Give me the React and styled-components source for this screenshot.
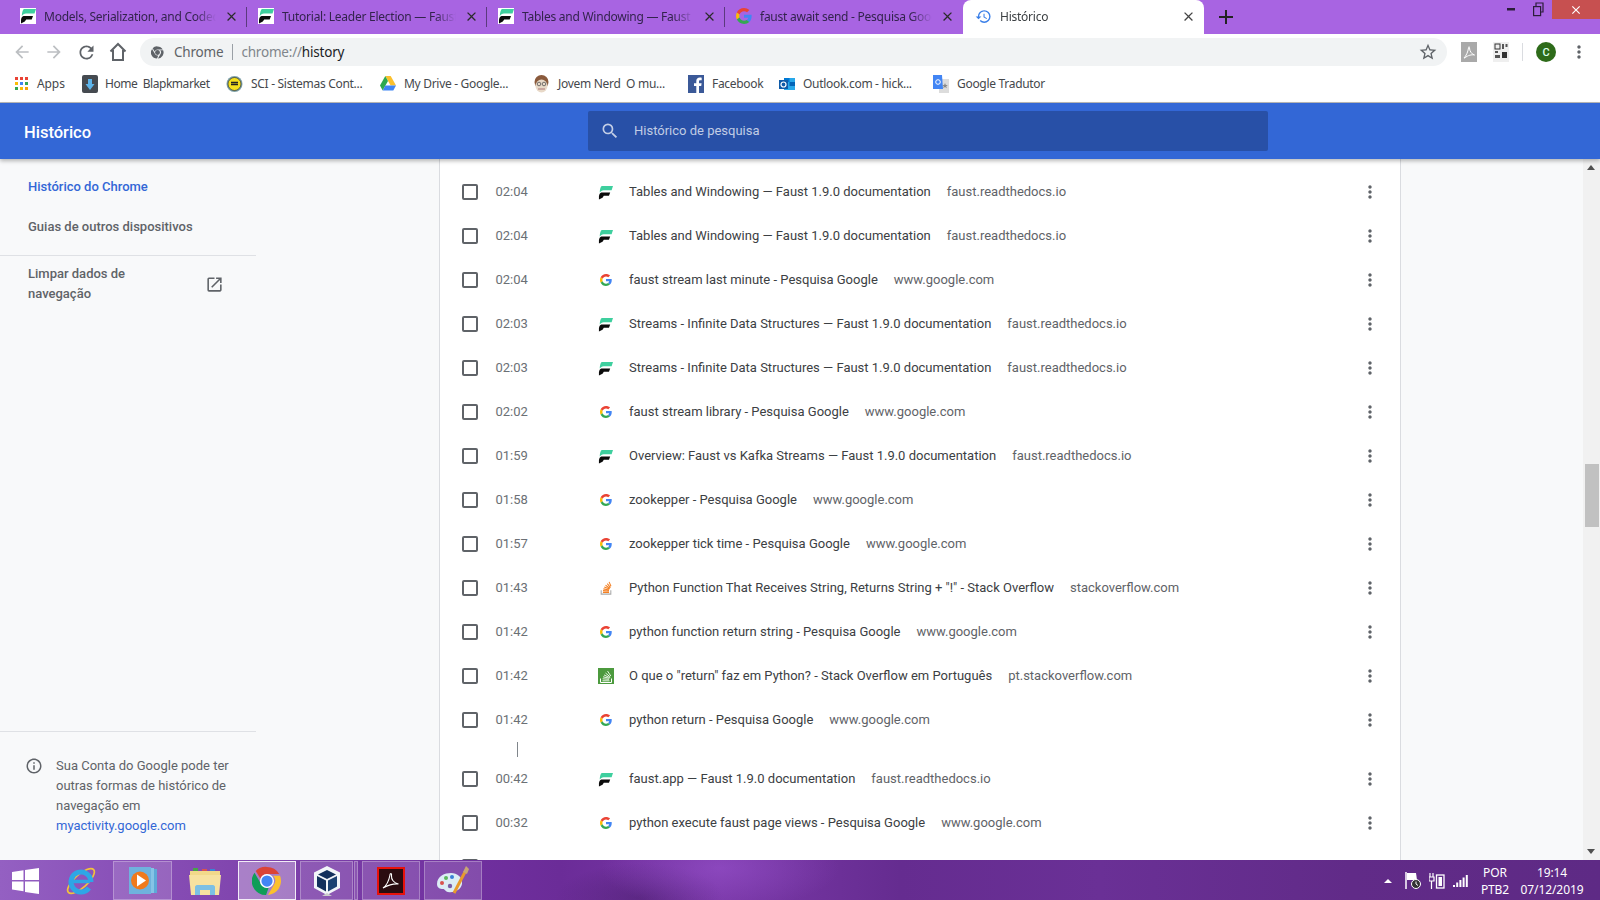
import React from 'react';
import styled, { createGlobalStyle } from 'styled-components';
import { MdArrowBack, MdArrowForward, MdRefresh, MdSearch, MdOpenInNew, MdInfoOutline, MdMoreVert, MdClose, MdAdd, MdHistory, MdStarBorder } from 'react-icons/md';

const Global = createGlobalStyle`
  html, body { margin: 0; padding: 0; height: 100%; overflow: hidden; background: #fff; }
  * { box-sizing: border-box; }
`;
const Page = styled.div`width:1600px;height:900px;display:flex;flex-direction:column;overflow:hidden;font-family:Roboto,"Liberation Sans",sans-serif;`;

const TabStrip = styled.div`height:34px;flex:none;background:#a864e2;display:flex;align-items:stretch;font-family:"Noto Sans","Open Sans",sans-serif;`;
const Tab = styled.div`
  width:${p => p.$w}px;flex:none;display:flex;align-items:center;padding-left:${p => p.$pad}px;padding-right:8px;padding-bottom:2px;gap:8px;font-size:12px;letter-spacing:-.25px;
  color:${p => p.$active ? '#3c4043' : '#33234d'};background:${p => p.$active ? '#fff' : 'transparent'};border-radius:${p => p.$active ? '8px 8px 0 0' : '0'};
  position:relative;
  ${p => p.$sep ? `&::after{content:"";position:absolute;right:0;top:7px;height:20px;width:1px;background:#5b3a7e;}` : ''}
`;
const TabTitle = styled.span`flex:1;min-width:0;white-space:nowrap;overflow:hidden;-webkit-mask-image:linear-gradient(90deg,#000 88%,transparent);mask-image:linear-gradient(90deg,#000 88%,transparent);`;
const NewTab = styled.div`width:44px;display:flex;align-items:center;justify-content:center;color:#222;font-size:24px;padding-bottom:1px;`;
const WindowControls = styled.div`margin-left:auto;display:flex;height:19px;color:#2b1d3a;align-items:flex-start;`;
const WinButton = styled.div`width:${p => p.$w}px;height:19px;display:flex;align-items:center;justify-content:center;background:${p => p.$close ? '#c75050' : 'transparent'};color:${p => p.$close ? '#fff' : '#2b1d3a'};`;

const Toolbar = styled.div`height:34px;flex:none;background:#fff;display:flex;align-items:center;padding-left:6px;padding-top:2px;`;
const NavIcon = styled.div`width:${p => p.$w || 32}px;flex:none;display:flex;justify-content:center;align-items:center;color:${p => p.$dim ? '#bcbfc2' : '#5f6368'};`;
const Omnibox = styled.div`width:1307px;height:28px;margin-left:6px;flex:none;background:#f1f3f4;border-radius:14px;display:flex;align-items:center;padding-left:11px;padding-right:9px;font-family:"Noto Sans",sans-serif;font-size:13.5px;letter-spacing:-.2px;color:#5f6368;`;
const OmniSite = styled.span`margin-left:10px;`;
const OmniSep = styled.span`width:1px;height:16px;background:#9aa0a6;margin:0 8px 0 9px;`;
const OmniPath = styled.span`color:#80868b;`;
const OmniStrong = styled.span`color:#202124;`;
const OmniStar = styled.div`margin-left:auto;display:flex;color:#5f6368;`;
const Extensions = styled.div`display:flex;align-items:center;margin-left:14px;flex:1;`;
const ToolSep = styled.span`width:1px;height:18px;background:#dadce0;margin:0 13px 0 13px;`;
const Avatar = styled.div`width:20px;height:20px;border-radius:50%;background:#2e6b1a;color:#dfe;font:500 11px Roboto,sans-serif;display:flex;align-items:center;justify-content:center;`;
const ExtGap = styled.span`width:${p => p.$w}px;flex:none;`;
const ExtMenu = styled.span`display:flex;margin-left:13px;color:#5f6368;font-size:20px;`;

const BookmarkBar = styled.div`height:35px;flex:none;background:#fff;display:flex;align-items:center;padding-left:15px;padding-bottom:3px;border-bottom:1px solid #b9b9b9;font-family:"Noto Sans",sans-serif;font-size:12px;letter-spacing:-.3px;color:#45484c;`;
const Bookmark = styled.div`width:${p => p.$w}px;flex:none;display:flex;align-items:center;gap:${p => p.$gap}px;white-space:pre;`;
const BookmarkLabel = styled.span`letter-spacing:${p => p.$ls || '-.3px'};`;

const Header = styled.header`height:56px;flex:none;background:#3367d6;display:flex;align-items:center;padding-left:24px;position:relative;z-index:2;box-shadow:0 2px 4px rgba(0,0,0,.28);`;
const HeaderTitle = styled.h1`margin:2px 0 0;width:564px;font:500 16.5px Roboto,sans-serif;color:#fff;`;
const SearchBox = styled.div`width:680px;height:40px;background:#2850a7;border-radius:2px;display:flex;align-items:center;padding-left:12px;padding-bottom:1px;gap:14px;color:rgba(255,255,255,.72);font-size:13px;`;

const Main = styled.div`flex:1;min-height:0;display:flex;background:#f8f9fa;`;
const Sidebar = styled.aside`width:439px;flex:none;display:flex;flex-direction:column;font-size:13px;font-weight:500;color:#5f6368;`;
const SideNav = styled.div`width:256px;padding-top:7px;`;
const SideItem = styled.div`height:40px;display:flex;align-items:center;padding-left:28px;color:${p => p.$active ? '#3367d6' : '#5f6368'};`;
const SideClear = styled.div`margin-top:9px;border-top:1px solid #dfe1e5;padding:8px 32px 0 28px;display:flex;align-items:center;justify-content:space-between;line-height:20px;color:#5f6368;`;
const ClearLabel = styled.div`width:130px;`;
const SideFoot = styled.div`margin-top:auto;width:256px;border-top:1px solid #dfe1e5;padding:24px 16px 25px 26px;display:flex;gap:14px;font-weight:400;line-height:20px;height:129px;`;
const FootIcon = styled.div`flex:none;width:17px;height:18px;color:#5f6368;font-size:18px;margin-top:1px;margin-left:-1px;`;
const FootLink = styled.span`color:#3367d6;`;

const Card = styled.section`width:962px;flex:none;background:#fff;border-left:1px solid #dadce0;border-right:1px solid #dadce0;padding-top:11px;overflow:hidden;`;
const Row = styled.div`height:44px;display:flex;align-items:center;padding-left:22px;padding-right:20px;font-size:13px;`;
const Check = styled.span`width:16px;height:16px;border:2px solid #5f6368;border-radius:2px;flex:none;`;
const Time = styled.span`width:102px;margin:0 0 2px 17.5px;flex:none;color:#6b7075;`;
const Fav = styled.span`width:16px;height:16px;flex:none;display:flex;align-items:center;justify-content:center;`;
const Title = styled.span`margin:0 0 2px 15.5px;color:#3c4043;white-space:nowrap;`;
const Domain = styled.span`margin:0 0 2px 16px;color:#5f6368;white-space:nowrap;`;
const Dots = styled.span`margin-left:auto;color:#5f6368;display:flex;font-size:20px;`;
const Gap = styled.div`height:15px;width:1px;margin-left:77px;background:#80868b;`;

const Gutter = styled.div`flex:1;`;
const Scrollbar = styled.div`width:17px;flex:none;background:#f1f1f1;display:flex;flex-direction:column;align-items:center;padding-top:305px;position:relative;`;
const Thumb = styled.div`width:14px;height:63px;background:#c1c1c1;`;
const Arrow = styled.span`position:absolute;left:4px;width:0;height:0;border-left:4.5px solid transparent;border-right:4.5px solid transparent;
  ${p => p.$up ? 'top:6px;border-bottom:5px solid #505050;' : 'bottom:6px;border-top:5px solid #505050;'}`;

const Taskbar = styled.footer`height:40px;flex:none;display:flex;align-items:stretch;padding-top:1px;color:#fff;font-family:"Noto Sans",sans-serif;font-size:12px;
  background:
    radial-gradient(ellipse 170px 60px at 720px 8px,rgba(160,90,215,.45),transparent 70%),
    radial-gradient(ellipse 120px 50px at 640px 38px,rgba(50,20,80,.35),transparent 70%),
    linear-gradient(90deg,#9460c2 0,#8a52b9 110px,#7c3fa9 300px,#6f2f9e 480px,#6b2c98 560px,#7a38a8 720px,#652c90 900px,#6a3096 1100px,#612b88 1350px,#5e2a85 100%);
  position:relative;z-index:3;`;
const TaskSlot = styled.div`width:${p => p.$w}px;margin-left:${p => p.$ml || 0}px;flex:none;display:flex;align-items:center;justify-content:center;
  ${p => p.$boxed ? 'background:rgba(255,255,255,.14);border:1px solid rgba(255,255,255,.28);' : ''}
  ${p => p.$active ? 'background:rgba(255,255,255,.32);border:1px solid rgba(255,255,255,.85);' : ''}`;
const Tray = styled.div`margin-left:auto;display:flex;align-items:center;`;
const TrayIcon = styled.div`width:${p => p.$w}px;flex:none;display:flex;justify-content:center;`;
const TrayText = styled.div`width:${p => p.$w}px;flex:none;text-align:center;line-height:17px;letter-spacing:-.1px;`;

const Faust = ({ s = 15, bg }) => (
  <svg width={s} height={s} viewBox="0 0 16 16">
    {bg && <rect width="16" height="16" fill="#fff"/>}
    <path d="M4 1H16L14.500 5.500H6C4.200 5.500 2.800 6.500 1.800 8 2 4.500 2.700 1.500 4 1z" fill="#3ecf9e"/>
    <path d="M3.500 8H13L11.700 11.500H6.200L4.800 13.500 1 15.500V12C1.200 10 2.200 8.300 3.500 8z" fill="#0b0b0b"/>
  </svg>
);
const GoogleG = ({ s = 12 }) => (
  <svg width={s} height={s} viewBox="0 0 48 48"><path fill="#EA4335" d="M24 9.500c3.500 0 6.700 1.300 9.200 3.400l6.900-6.900C35.900 2.200 30.300 0 24 0 14.600 0 6.500 5.400 2.600 13.200l8 6.200C12.400 13.700 17.700 9.500 24 9.500z"/><path fill="#4285F4" d="M46.900 24.500c0-1.600-.1-3.100-.4-4.500H24v9h12.900c-.6 3-2.300 5.500-4.800 7.200l7.700 6c4.500-4.200 7.100-10.300 7.100-17.700z"/><path fill="#FBBC05" d="M10.500 28.600c-.5-1.400-.8-3-.8-4.600s.3-3.200.8-4.600l-8-6.200C.9 16.500 0 20.100 0 24s.9 7.500 2.600 10.800z"/><path fill="#34A853" d="M24 48c6.500 0 11.900-2.100 15.900-5.800l-7.700-6c-2.200 1.400-4.900 2.300-8.100 2.300-6.300 0-11.600-4.200-13.500-9.900l-8 6.200C6.500 42.600 14.600 48 24 48z"/></svg>
);
const SO = () => (
  <svg width="14" height="14" viewBox="0 0 16 16" fill="none"><path d="M2.500 10.500v4.500h11v-4.500" stroke="#aaa" strokeWidth="1.200"/><path d="M4.500 13h7M4.600 11l6.800.4M5 9l6.500 1.200M6 6.900l6 2.300M7.500 4.800l5 3.600M9.500 3l3.600 4.500M11.500 1l2.200 5" stroke="#f48024" strokeWidth="1.200"/></svg>
);
const SOPt = () => (
  <svg width="16" height="16" viewBox="0 0 16 16" fill="none"><rect width="16" height="16" fill="#4c9a3e"/><path d="M2.500 10.500v4h11v-4" stroke="#fff" strokeWidth="1"/><path d="M4.500 12.800h7M4.600 10.800l6.500.5M5 8.800l6.400 1.500M6 6.900l5.800 2.800M7.500 5l4.800 4M9.500 3l3.300 5" stroke="#e8f5e4" strokeWidth="1"/></svg>
);
const AppsGrid = () => (
  <svg width="13" height="13" viewBox="0 0 13 13">{['#e94335','#e94335','#e94335','#fbbc05','#3f85f4','#34a853','#34a853','#fbbc05','#f4a20a'].map((c, i) => <rect key={i} x={(i % 3) * 5} y={Math.floor(i / 3) * 5} width="3" height="3" fill={c}/>)}</svg>
);
const HomeMark = () => (
  <svg width="16" height="18" viewBox="0 0 16 18"><rect width="16" height="18" rx="2" fill="#454a50"/><path d="M6 4h4v5h2.500L8 15 3.500 9H6z" fill="#5db4ea"/></svg>
);
const SciMark = () => (
  <svg width="17" height="18" viewBox="0 0 17 18"><circle cx="8.500" cy="9" r="8" fill="#7da0a8"/><circle cx="8.500" cy="9" r="6.500" fill="#f3df1e" stroke="#222" strokeWidth=".6"/><path d="M5 9.500h7M5 7.500h7" stroke="#222" strokeWidth="1.300"/></svg>
);
const Drive = () => (
  <svg width="16" height="15" viewBox="0 0 16 15"><path d="M5.300 0h5.400L16 9.500h-5.400z" fill="#fbc02d"/><path d="M5.300 0 0 9.500l2.700 5L8 5z" fill="#2da94f"/><path d="M2.700 14.500h10.600l2.700-5H5.400z" fill="#3f85f4"/></svg>
);
const Nerd = () => (
  <svg width="17" height="18" viewBox="0 0 17 18"><circle cx="8.500" cy="7" r="7" fill="#8a5a3c"/><ellipse cx="8.500" cy="11" rx="6" ry="6.500" fill="#e8d9c8"/><circle cx="6" cy="9" r="1.800" fill="none" stroke="#555" strokeWidth=".8"/><circle cx="11" cy="9" r="1.800" fill="none" stroke="#555" strokeWidth=".8"/><path d="M5 14h7" stroke="#a77" strokeWidth="1"/></svg>
);
const Fb = () => (
  <svg width="16" height="18" viewBox="0 0 16 18"><rect width="16" height="18" fill="#3b5998"/><path d="M11 18v-7h2.200l.4-2.800H11V6.500c0-.8.300-1.300 1.300-1.300h1.400V2.700C13.300 2.600 12.600 2.500 11.800 2.500 9.700 2.500 8.300 3.800 8.300 6v2.200H6V11h2.300v7z" fill="#fff"/></svg>
);
const Outlook = () => (
  <svg width="16" height="16" viewBox="0 0 16 16"><rect x="5" y="2" width="11" height="12" fill="#28a8ea"/><rect x="5" y="2" width="5.500" height="4" fill="#0078d4"/><rect x="10.500" y="6" width="5.500" height="4" fill="#0364b8"/><rect y="4" width="9" height="9" fill="#0f5ba8"/><circle cx="4.500" cy="8.500" r="2.500" fill="none" stroke="#fff" strokeWidth="1.200"/></svg>
);
const Translate = () => (
  <svg width="16" height="18" viewBox="0 0 16 18"><path d="M6 4h10v14H6z" fill="#dcdcdc"/><path d="M0 0h9l1 14H0z" fill="#4285f4"/><circle cx="5" cy="7" r="2.300" fill="none" stroke="#fff" strokeWidth="1"/><path d="M12 8l.8 2h2l-1.600 1.300.6 2-1.800-1.200-1.800 1.200.6-2L9.200 10h2z" fill="#888"/></svg>
);
const ChromeMark = ({ s = 14, dark }) => {
  const a = dark ? '#5f6368' : '#db4437', b = dark ? '#5f6368' : '#fbc02d', c = dark ? '#5f6368' : '#0f9d58', m = dark ? '#5f6368' : '#4285f4';
  return (
    <svg width={s} height={s} viewBox="0 0 32 32">
      <path d="M16 1a15 15 0 0 1 13 7.500H16a7.500 7.500 0 0 0-7 5L4 5.300A15 15 0 0 1 16 1z" fill={a}/>
      <path d="M29.900 10.500A15 15 0 0 1 17 31l6.500-11.200a7.500 7.500 0 0 0-1-9.300z" fill={b}/>
      <path d="M15 31A15 15 0 0 1 2.700 7.200l6.500 11.300a7.500 7.500 0 0 0 8.500 4.600z" fill={c}/>
      {!dark && <circle cx="16" cy="16" r="7.500" fill="#fff"/>}
      <circle cx="16" cy="16" r="6" fill={m}/>
    </svg>
  );
};
const Pdf = () => (
  <svg width="16" height="20" viewBox="0 0 16 20"><rect width="16" height="20" fill="#a9a9a9"/><path d="M3 16c2-2 4-6 4.500-10 .2-2 1-1.500 1 0 0 3 2 6 5 7-3-.5-6 0-10 3z" fill="none" stroke="#fff" strokeWidth="1"/></svg>
);
const Qr = () => (
  <svg width="16" height="20" viewBox="0 0 16 20"><rect width="16" height="20" fill="#efefef"/><rect x="2" y="2" width="5" height="5" fill="none" stroke="#333" strokeWidth="1"/><rect x="9" y="2" width="2" height="5" fill="#555"/><rect x="12.500" y="2" width="2" height="3" fill="#555"/><rect x="2" y="9" width="3" height="2" fill="#555"/><rect x="2" y="13" width="5" height="3" fill="#555"/><path d="M9 10h5v6H9z" fill="#333"/></svg>
);
const WinLogo = () => (
  <svg width="27" height="26" viewBox="0 0 27 26"><path d="M0 4l11.500-1.700V12H0zM13 2.100 27 0v12H13zM0 13.500h11.500v9.700L0 21.600zM13 13.500h14V26l-14-2z" fill="#fff"/></svg>
);
const IE = () => (
  <svg width="32" height="32" viewBox="0 0 32 32">
    <ellipse cx="16" cy="16" rx="17" ry="6.500" fill="none" stroke="#f2c33c" strokeWidth="1.700" transform="rotate(-42 16 16)"/>
    <path d="M26 17A10 10 0 1 0 24 23" fill="none" stroke="#2ea6e6" strokeWidth="5"/>
    <path d="M8 16.500h17" stroke="#2ea6e6" strokeWidth="3.500"/>
  </svg>
);
const Media = () => (
  <svg width="28" height="30" viewBox="0 0 28 30"><rect x="6" y="3" width="22" height="24" fill="#5da9d8"/><rect x="3" y="2" width="22" height="25" fill="#86c3e6"/><rect y="1" width="22" height="27" fill="#6fb2dd"/><circle cx="11" cy="14.500" r="9" fill="#f07a1c"/><path d="M8 8.500l9 6-9 6z" fill="#fff"/></svg>
);
const Folder = () => (
  <svg width="32" height="30" viewBox="0 0 32 30"><path d="M1 5h30v5H1z" fill="#f2d98a"/><rect x="4" y="2" width="5" height="3" fill="#47a447"/><rect x="13" y="3" width="5" height="2" fill="#d9534f"/><rect x="21" y="3" width="5" height="2" fill="#3a86d6"/><path d="M0 9h32l-2 20H2z" fill="#f7e2a0"/><path d="M6 29V21c0-1 1-2 2-2h16c1 0 2 1 2 2v8h-5v-5H11v5z" fill="#7cc0e4"/></svg>
);
const VBox = () => (
  <svg width="28" height="32" viewBox="0 0 28 32"><path d="M14 1 27 7.500v15.500l-13 7-13-7V7.500z" fill="#f2f5f9"/><path d="M14 5 23 9.500 14 14 5 9.500z" fill="#12305c"/><path d="M13 15.500v11L4 21.500V11z" fill="#12305c"/><path d="M15 15.500v11l9-5V11z" fill="#1b4272"/><path d="M14 28l-5 3h10z" fill="#ccc"/></svg>
);
const Acro = () => (
  <svg width="28" height="28" viewBox="0 0 28 28"><rect x="1" y="1" width="26" height="26" fill="#2a0c10" stroke="#e8120c" strokeWidth="2"/><path d="M6 21c3-2 6-8 7-13 .2-2 2-2 1.500 1-.3 3 2 7 7 8-4-.6-9 .5-15.500 4z" fill="none" stroke="#fff" strokeWidth="1.100"/></svg>
);
const Palette = () => (
  <svg width="34" height="32" viewBox="0 0 34 32"><path d="M1 19C1 11 9 8 15 8s12 4 11 11c-1 6-8 9-14 8-3-.5-3-3-5-3-3 0-6-1-6-5z" fill="#dcecf5"/><circle cx="6" cy="18" r="2" fill="#d9534f"/><circle cx="10" cy="13" r="2" fill="#5cb85c"/><circle cx="16" cy="12" r="2" fill="#3a7fd6"/><circle cx="14" cy="21" r="2.200" fill="#7a5ca8"/><path d="M18 28 29 7" stroke="#e89a2c" strokeWidth="3"/><path d="M27 7l3-6 3 3-2 5z" fill="#c8a574"/></svg>
);
const FlagIcon = () => (
  <svg width="16" height="20" viewBox="0 0 16 20" fill="none"><path d="M1 1v17" stroke="#fff" strokeWidth="1.500"/><path d="M2 2h9l1 7H2z" fill="#fff"/><circle cx="11" cy="13" r="4.500" fill="#333" stroke="#fff"/><path d="M11 10.500V13l2 1.500" stroke="#fff"/></svg>
);
const BatteryIcon = () => (
  <svg width="16" height="16" viewBox="0 0 16 16" fill="none"><path d="M1 0v4M4 0v4M0 4h5v4H0zM2.500 8v8" stroke="#fff" strokeWidth="1.200"/><rect x="7.500" y="2" width="7.500" height="13" fill="none" stroke="#fff" strokeWidth="1.300"/><rect x="9.500" y="4" width="3.500" height="9" fill="#fff"/></svg>
);
const SignalIcon = () => (
  <svg width="16" height="12" viewBox="0 0 16 12">{[0,3.200,6.400,9.600,12.800].map((x, i) => <rect key={i} x={x} y={10 - i * 2.500} width="2" height={2 + i * 2.500} fill="#fff"/>)}</svg>
);
const MinGlyph = () => <svg width="8" height="3" viewBox="0 0 8 3"><rect width="8" height="2.500" fill="#2b1d3a"/></svg>;
const Restore = () => <svg width="11" height="15" viewBox="0 0 11 15" fill="none" stroke="#2b1d3a" strokeWidth="1.200"><rect x=".6" y="4.600" width="7" height="9"/><path d="M3 4V1h7v9H8"/></svg>;
const HomeOutline = () => <svg width="18" height="20" viewBox="0 0 18 20" fill="none" stroke="#5f6368" strokeWidth="2"><path d="M1.500 9.500 9 2l7.500 7.500M4 8v10h10V8"/></svg>;
const TrayArrow = () => <svg width="8" height="4" viewBox="0 0 8 4"><path d="M0 4l4-4 4 4z" fill="#fff"/></svg>;

const Fa = <Faust/>, G = <GoogleG/>;
const earlier = [
  ['02:04', Fa, 'Tables and Windowing — Faust 1.9.0 documentation', 'faust.readthedocs.io'],
  ['02:04', Fa, 'Tables and Windowing — Faust 1.9.0 documentation', 'faust.readthedocs.io'],
  ['02:04', G, 'faust stream last minute - Pesquisa Google', 'www.google.com'],
  ['02:03', Fa, 'Streams - Infinite Data Structures — Faust 1.9.0 documentation', 'faust.readthedocs.io'],
  ['02:03', Fa, 'Streams - Infinite Data Structures — Faust 1.9.0 documentation', 'faust.readthedocs.io'],
  ['02:02', G, 'faust stream library - Pesquisa Google', 'www.google.com'],
  ['01:59', Fa, 'Overview: Faust vs Kafka Streams — Faust 1.9.0 documentation', 'faust.readthedocs.io'],
  ['01:58', G, 'zookepper - Pesquisa Google', 'www.google.com'],
  ['01:57', G, 'zookepper tick time - Pesquisa Google', 'www.google.com'],
  ['01:43', <SO/>, 'Python Function That Receives String, Returns String + "!" - Stack Overflow', 'stackoverflow.com'],
  ['01:42', G, 'python function return string - Pesquisa Google', 'www.google.com'],
  ['01:42', <SOPt/>, 'O que o "return" faz em Python? - Stack Overflow em Português', 'pt.stackoverflow.com'],
  ['01:42', G, 'python return - Pesquisa Google', 'www.google.com'],
];
const later = [
  ['00:42', Fa, 'faust.app — Faust 1.9.0 documentation', 'faust.readthedocs.io'],
  ['00:32', G, 'python execute faust page views - Pesquisa Google', 'www.google.com'],
];
const HistoryRow = ({ r }) => (
  <Row>
    <Check/>
    <Time>{r[0]}</Time>
    <Fav>{r[1]}</Fav>
    <Title>{r[2]}</Title>
    <Domain>{r[3]}</Domain>
    <Dots><MdMoreVert/></Dots>
  </Row>
);
const PartialRow = () => <Row><Check/></Row>;
const tabs = [
  [<Faust s={16} bg/>, 'Models, Serialization, and Codecs', 247, 20],
  [<Faust s={16} bg/>, 'Tutorial: Leader Election — Faust 1.9.0', 240, 11],
  [<Faust s={16} bg/>, 'Tables and Windowing — Faust 1.9.0', 238, 11],
  [<GoogleG s={16}/>, 'faust await send - Pesquisa Google', 238, 11],
];
const bookmarks = [
  [<AppsGrid/>, 'Apps', 67, 9, '-.1px'],
  [<HomeMark/>, 'Home  Blapkmarket', 144, 7, '-.45px'],
  [<SciMark/>, 'SCI - Sistemas Cont...', 154, 8],
  [<Drive/>, 'My Drive - Google...', 153, 8],
  [<Nerd/>, 'Jovem Nerd  O mu...', 155, 8],
  [<Fb/>, 'Facebook', 91, 8],
  [<Outlook/>, 'Outlook.com - hick...', 154, 8],
  [<Translate/>, 'Google Tradutor', 130, 8],
];

export default function App() {
  return (
    <Page>
      <Global/>
      <TabStrip>
        {tabs.map((t, i) => (
          <Tab key={i} $w={t[2]} $pad={t[3]} $sep={i < 3}>
            {t[0]}<TabTitle>{t[1]}</TabTitle><MdClose size={15} color="#2b2b2b"/>
          </Tab>
        ))}
        <Tab $w={241} $pad={12} $active>
          <MdHistory size={17} color="#3a7fe8"/><TabTitle>Histórico</TabTitle><MdClose size={15} color="#444"/>
        </Tab>
        <NewTab><MdAdd/></NewTab>
        <WindowControls>
          <WinButton $w={26}><MinGlyph/></WinButton>
          <WinButton $w={28}><Restore/></WinButton>
          <WinButton $w={48} $close><MdClose size={14}/></WinButton>
        </WindowControls>
      </TabStrip>
      <Toolbar>
        <NavIcon $dim><MdArrowBack size={20}/></NavIcon>
        <NavIcon $dim><MdArrowForward size={20}/></NavIcon>
        <NavIcon><MdRefresh size={21}/></NavIcon>
        <NavIcon><HomeOutline/></NavIcon>
        <Omnibox>
          <ChromeMark s={13} dark/>
          <OmniSite>Chrome</OmniSite><OmniSep/>
          <OmniPath>chrome://<OmniStrong>history</OmniStrong></OmniPath>
          <OmniStar><MdStarBorder size={20}/></OmniStar>
        </Omnibox>
        <Extensions>
          <Pdf/><ExtGap $w={16}/><Qr/><ToolSep/><Avatar>C</Avatar>
          <ExtMenu><MdMoreVert/></ExtMenu>
        </Extensions>
      </Toolbar>
      <BookmarkBar>
        {bookmarks.map((b, i) => <Bookmark key={i} $w={b[2]} $gap={b[3]}>{b[0]}<BookmarkLabel $ls={b[4]}>{b[1]}</BookmarkLabel></Bookmark>)}
      </BookmarkBar>
      <Header>
        <HeaderTitle>Histórico</HeaderTitle>
        <SearchBox><MdSearch size={20}/>Histórico de pesquisa</SearchBox>
      </Header>
      <Main>
        <Sidebar>
          <SideNav>
            <SideItem $active>Histórico do Chrome</SideItem>
            <SideItem>Guias de outros dispositivos</SideItem>
            <SideClear>
              <ClearLabel>Limpar dados de navegação</ClearLabel>
              <MdOpenInNew size={19}/>
            </SideClear>
          </SideNav>
          <SideFoot>
            <FootIcon><MdInfoOutline/></FootIcon>
            <div>Sua Conta do Google pode ter outras formas de histórico de navegação em <FootLink>myactivity.google.com</FootLink></div>
          </SideFoot>
        </Sidebar>
        <Card>
          {earlier.map((r, i) => <HistoryRow key={i} r={r}/>)}
          <Gap/>
          {later.map((r, i) => <HistoryRow key={i} r={r}/>)}
          <PartialRow/>
        </Card>
        <Gutter/>
        <Scrollbar>
          <Arrow $up/>
          <Thumb/>
          <Arrow/>
        </Scrollbar>
      </Main>
      <Taskbar>
        <TaskSlot $w={50}><WinLogo/></TaskSlot>
        <TaskSlot $w={62}><IE/></TaskSlot>
        <TaskSlot $w={59} $ml={1} $boxed><Media/></TaskSlot>
        <TaskSlot $w={66}><Folder/></TaskSlot>
        <TaskSlot $w={58} $active><ChromeMark s={30}/></TaskSlot>
        <TaskSlot $w={53} $ml={4} $boxed><VBox/></TaskSlot>
        <TaskSlot $w={4} $ml={1} $boxed/>
        <TaskSlot $w={58} $ml={4} $boxed><Acro/></TaskSlot>
        <TaskSlot $w={58} $ml={4} $boxed><Palette/></TaskSlot>
        <Tray>
          <TrayIcon $w={26}><TrayArrow/></TrayIcon>
          <TrayIcon $w={24}><FlagIcon/></TrayIcon>
          <TrayIcon $w={24}><BatteryIcon/></TrayIcon>
          <TrayIcon $w={24}><SignalIcon/></TrayIcon>
          <ExtGap $w={4}/>
          <TrayText $w={36}>POR<br/>PTB2</TrayText>
          <TrayText $w={78}>19:14<br/>07/12/2019</TrayText>
          <ExtGap $w={9}/>
        </Tray>
      </Taskbar>
    </Page>
  );
}
